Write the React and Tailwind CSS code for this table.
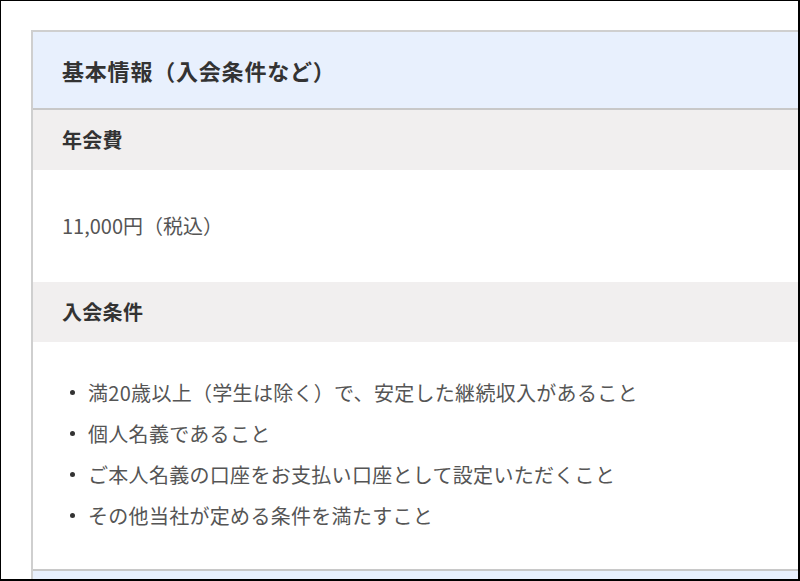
import React from 'react';

const conditions = [
  '満20歳以上（学生は除く）で、安定した継続収入があること',
  '個人名義であること',
  'ご本人名義の口座をお支払い口座として設定いただくこと',
  'その他当社が定める条件を満たすこと',
];

export default function App() {
  return (
    <div
      className="w-[800px] h-[581px] overflow-hidden bg-white border-l border-t border-r-2 border-b-2 border-black pt-[29px] pl-[30px]"
      style={{ fontFamily: '"Noto Sans CJK JP", "Noto Sans", sans-serif' }}
    >
      <div className="w-[820px] border-2 border-[#cfcfcf] bg-white">
        {/* Section title */}
        <div className="h-[78px] flex items-center pl-[29px] bg-[#e8f0fd] border-b-2 border-[#c8c8c8]">
          <h2 className="text-[22px] font-bold text-[#333] leading-none tracking-[0.8px]">基本情報（入会条件など）</h2>
        </div>

        {/* 年会費 */}
        <div className="h-[60px] flex items-center pl-[29px] bg-[#f1efef]">
          <h3 className="text-[20px] font-bold text-[#333] leading-none tracking-[0.3px]">年会費</h3>
        </div>
        <div className="h-[112px] flex items-center pl-[29px]">
          <p className="text-[20px] text-[#555] leading-none">11,000円（税込）</p>
        </div>

        {/* 入会条件 */}
        <div className="h-[60px] flex items-center pl-[29px] bg-[#f1efef]">
          <h3 className="text-[20px] font-bold text-[#333] leading-none tracking-[0.3px]">入会条件</h3>
        </div>
        <ul className="h-[227px] pt-[30px] pl-[37px]">
          {conditions.map((c) => (
            <li key={c} className="flex items-center h-[41px] text-[20px] text-[#555] tracking-[0.3px]">
              <span className="w-[5px] h-[5px] rounded-full bg-[#333] mr-[13px] shrink-0" />
              {c}
            </li>
          ))}
        </ul>

        {/* next section (cut off) */}
        <div className="h-[40px] bg-[#e8f0fd] border-t-2 border-[#c8c8c8]" />
      </div>
    </div>
  );
}
